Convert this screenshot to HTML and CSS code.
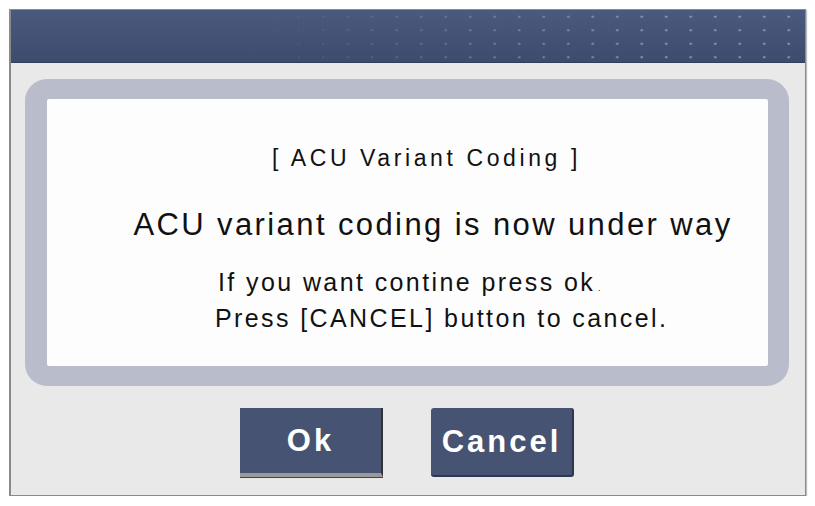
FILE: index.html
```html
<!DOCTYPE html>
<html lang="en">
<head>
  <meta charset="UTF-8">
  <meta name="viewport" content="width=device-width, initial-scale=1.0">
  <title>ACU Variant Coding</title>
  <link rel="stylesheet" href="styles.css">
</head>
<body>
  <div class="window">
    <div class="title-bar"></div>
    <div class="window-body">
      <div class="panel">
        <div class="panel-inner">
          <p class="heading">[ ACU Variant Coding ]</p>
          <p class="status">ACU variant coding is now under way</p>
          <div class="hint">
            <p class="hint-line first">If you want contine press ok<span class="dot">.</span></p>
            <p class="hint-line">Press [CANCEL] button to cancel.</p>
          </div>
        </div>
      </div>
      <div class="button-group">
        <button type="button" class="btn btn-ok">Ok</button>
        <button type="button" class="btn btn-cancel">Cancel</button>
      </div>
    </div>
  </div>
</body>
</html>
```

FILE: styles.css
```css
body {
  margin: 0;
  padding: 9px 0 0 9px;
  background: #fff;
  font-family: "Liberation Sans", Arial, sans-serif;
}
.window {
  width: 794px;
  height: 485px;
  border: 1px solid #8a8a8a;
  border-left-width: 2px;
  background: #e9e9e9;
  display: flex;
  flex-direction: column;
  box-shadow: 1px 1px 1px rgba(0, 0, 0, 0.25);
}
.title-bar {
  position: relative;
  height: 52px;
  background: linear-gradient(#4a5a7e, #3d4b6d);
  border-bottom: 1px solid #323e5a;
}
/* dotted texture fading in towards the right */
.title-bar::before {
  content: "";
  position: absolute;
  inset: 0;
  background-image: radial-gradient(circle, #8a98b8 0.9px, transparent 1.5px);
  background-size: 24.5px 13.5px;
  background-position: 6px 0px;
  -webkit-mask-image: linear-gradient(to right, transparent 30%, rgba(0,0,0,0.6) 60%, #000 80%);
  mask-image: linear-gradient(to right, transparent 30%, rgba(0,0,0,0.6) 60%, #000 80%);
}
.window-body {
  flex: 1;
  padding: 16px 0 0 14px;
}
.panel {
  width: 764px;
  height: 307px;
  box-sizing: border-box;
  padding: 20px 21px 20px 22px;
  background: #b8bccb;
  border-radius: 22px;
}
.panel-inner {
  height: 100%;
  background: #fdfdfd;
  border-radius: 2px;
  padding-left: 34px;
  text-align: center;
  color: #111;
  box-sizing: border-box;
  padding-top: 46px;
}
.panel-inner p {
  margin: 0;
}
.heading {
  font-size: 23px;
  letter-spacing: 3.6px;
  padding-left: 4px;
  line-height: 26px;
}
.status {
  margin-top: 37px !important;
  font-size: 31px;
  letter-spacing: 2.4px;
  padding-left: 17px;
  line-height: 34px;
}
.hint {
  text-align: left;
  padding-left: 134px;
  margin-top: 22px;
  font-size: 25px;
  letter-spacing: 2.4px;
  line-height: 36px;
}
.hint-line.first {
  padding-left: 3px;
}
.dot {
  font-size: 9px;
  line-height: 0;
  margin-left: 3px;
}
.button-group {
  display: flex;
  justify-content: center;
  gap: 48px;
  width: 764px;
  margin-top: 22px;
}
.btn {
  width: 143px;
  height: 69px;
  border: none;
  background: #475373;
  color: #fff;
  font-family: "Liberation Sans", Arial, sans-serif;
  font-size: 31px;
  font-weight: bold;
  letter-spacing: 3px;
  cursor: pointer;
}
.btn-ok {
  border-right: 2px solid #333;
  border-bottom: 4px solid #9a9a9a;
  box-shadow: 0 1px 0 #444;
}
.btn-cancel {
  border-radius: 3px;
  border-right: 2px solid #2e3650;
  border-bottom: 2px solid #2e3650;
}
```
